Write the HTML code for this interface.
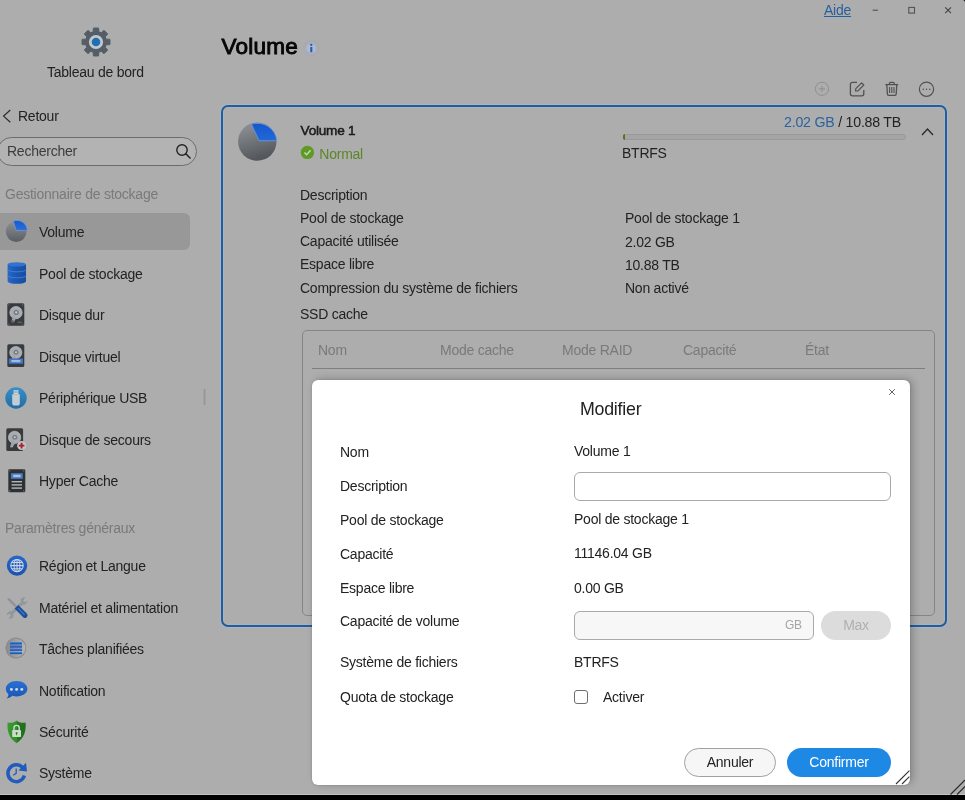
<!DOCTYPE html>
<html><head><meta charset="utf-8">
<style>
*{box-sizing:border-box;margin:0;padding:0}
html,body{width:965px;height:800px;overflow:hidden;background:#000}
body{font-family:"Liberation Sans",sans-serif;font-size:14px;color:#333;position:relative;letter-spacing:-0.24px}
#win{position:absolute;left:0;top:0;width:965px;height:795px;background:#fff;border-top-right-radius:3px;overflow:hidden;will-change:transform;-webkit-font-smoothing:antialiased}
#ov{position:absolute;left:0;top:0;width:965px;height:795px;background:rgba(0,0,0,.322);border-top-right-radius:3px}
.t{position:absolute;white-space:nowrap;line-height:16px;height:16px}
.g{color:#b4b4b4}
.abs{position:absolute}
svg{position:absolute;overflow:visible}
#sel{position:absolute;left:-6px;top:213px;width:196px;height:37px;border-radius:6px;background:#e0e0e0}
#search{position:absolute;left:-3px;top:137px;width:200px;height:29px;border:1px solid #6c6c6c;border-radius:15px;background:#b3b3b3}
#card{position:absolute;left:221px;top:105px;width:726px;height:522px;border:2px solid #2b5b90;border-radius:7px;box-shadow:0 0 0 1px rgba(150,190,232,.6), inset 0 0 0 1px rgba(150,190,232,.45)}
#ssd{position:absolute;left:302px;top:330px;width:633px;height:286px;border:1px solid #c4c4c4;border-radius:5px}
#modal{position:absolute;left:312px;top:380px;width:598px;height:405px;background:#fff;border-radius:6px;box-shadow:3px -1px 8px rgba(0,0,0,.24),0 0 2px rgba(0,0,0,.22)}
.inp{position:absolute;border:1px solid #a9a9a9;border-radius:6px;background:#fff}
.btn{position:absolute;height:29px;border-radius:15px;text-align:center;line-height:27px;font-size:14px}
.m{color:#222}
</style></head><body>
<div id="win">

<!-- SIDEBAR -->
<div class="t" style="left:47px;top:64px">Tableau de bord</div>
<div class="t" style="left:18px;top:108px">Retour</div>
<div class="t g" style="left:5px;top:186px">Gestionnaire de stockage</div>
<div id="sel"></div>
<div class="t" style="left:39px;top:223.8px">Volume</div>
<div class="t" style="left:39px;top:265.8px">Pool de stockage</div>
<div class="t" style="left:39px;top:306.8px">Disque dur</div>
<div class="t" style="left:39px;top:348.8px">Disque virtuel</div>
<div class="t" style="left:39px;top:389.8px">Périphérique USB</div>
<div class="t" style="left:39px;top:431.8px">Disque de secours</div>
<div class="t" style="left:39px;top:472.7px">Hyper Cache</div>
<div class="t g" style="left:5px;top:520.3px">Paramètres généraux</div>
<div class="t" style="left:39px;top:557.7px">Région et Langue</div>
<div class="t" style="left:39px;top:599.5px">Matériel et alimentation</div>
<div class="t" style="left:39px;top:640.6px">Tâches planifiées</div>
<div class="t" style="left:39px;top:682.6px">Notification</div>
<div class="t" style="left:39px;top:723.7px">Sécurité</div>
<div class="t" style="left:39px;top:765.3px">Système</div>
<div class="abs" style="left:203px;top:389px;width:3px;height:16px;background:#dcdcdc;border-left:1px solid #f2f2f2;border-right:1px solid #f2f2f2"></div>
<!--ICONS-->

<!-- MAIN -->
<div class="t" id="title" style="left:221.6px;top:32px;font-size:22.6px;line-height:30px;height:30px;color:#0a0a0a;letter-spacing:0.15px;-webkit-text-stroke:0.9px #0a0a0a">Volume</div>
<div class="t" style="left:824px;top:2px;color:#3a8ee6;text-decoration:underline">Aide</div>
<!--TOPICONS-->

<div class="t" style="left:300.6px;top:122.8px;font-size:13.6px;-webkit-text-stroke:0.5px #2a2a2a;color:#2a2a2a">Volume 1</div>
<div class="t" style="left:319.3px;top:145.6px;color:#8bc53f">Normal</div>
<div class="t" style="right:64px;top:114px;font-size:14.2px"><span style="color:#3f93ea">2.02 GB</span> / 10.88 TB</div>
<div class="abs" style="left:623px;top:134px;width:283px;height:6px;border:1px solid #e2e2e2;border-radius:3px;background:#f4f4f4"></div>
<div class="abs" style="left:623px;top:134px;width:2px;height:6px;background:#8aa52a;border-radius:2px 0 0 2px"></div>
<div class="t" style="left:622px;top:144.5px">BTRFS</div>

<div class="t" style="left:300px;top:187px">Description</div>
<div class="t" style="left:300px;top:210px">Pool de stockage</div>
<div class="t" style="left:300px;top:232.8px">Capacité utilisée</div>
<div class="t" style="left:300px;top:256.1px">Espace libre</div>
<div class="t" style="left:300px;top:280px">Compression du système de fichiers</div>
<div class="t" style="left:300px;top:305.5px">SSD cache</div>
<div class="t" style="left:625px;top:210px">Pool de stockage 1</div>
<div class="t" style="left:625px;top:233.5px">2.02 GB</div>
<div class="t" style="left:625px;top:256.5px">10.88 TB</div>
<div class="t" style="left:625px;top:280px">Non activé</div>

<div id="ssd"></div>
<div class="t g" style="left:318px;top:342px">Nom</div>
<div class="t g" style="left:440px;top:342px">Mode cache</div>
<div class="t g" style="left:562px;top:342px">Mode RAID</div>
<div class="t g" style="left:683px;top:342px">Capacité</div>
<div class="t g" style="left:805px;top:342px">État</div>
<div class="abs" style="left:312px;top:368px;width:613px;height:1px;background:#bcbcbc"></div>

<div id="ov"></div>
<div class="abs" style="left:0;top:794px;width:965px;height:1px;background:#c2c2c2"></div>
<div id="card"></div>
<div id="search"></div>
<div class="t" style="left:7px;top:143px;color:#3c3c3c">Rechercher</div>
<!--OVICONS-->
<!-- gear -->
<svg style="left:95.7px;top:42px" width="1" height="1">
<path d="M-2.83 -10.21 L-2.59 -13.96 L2.59 -13.96 L2.83 -10.21 L5.22 -9.23 L8.04 -11.70 L11.70 -8.04 L9.23 -5.22 L10.21 -2.83 L13.96 -2.59 L13.96 2.59 L10.21 2.83 L9.23 5.22 L11.70 8.04 L8.04 11.70 L5.22 9.23 L2.83 10.21 L2.59 13.96 L-2.59 13.96 L-2.83 10.21 L-5.22 9.23 L-8.04 11.70 L-11.70 8.04 L-9.23 5.22 L-10.21 2.83 L-13.96 2.59 L-13.96 -2.59 L-10.21 -2.83 L-9.23 -5.22 L-11.70 -8.04 L-8.04 -11.70 L-5.22 -9.23Z" fill="#555e67" stroke="#555e67" stroke-width="1" stroke-linejoin="round"/>
<circle r="7.1" fill="#c3c8cc"/><circle r="4.3" fill="#1f6fb5"/>
</svg>
<!-- back chevron -->
<svg style="left:0;top:107px" width="16" height="18"><path d="M10.3 3 L3.6 9.1 L10.3 15.2" fill="none" stroke="#2a2a2a" stroke-width="1.2"/></svg>
<!-- search glass -->
<svg style="left:174px;top:142px" width="20" height="20"><circle cx="8" cy="8" r="5.2" fill="none" stroke="#222" stroke-width="1.4"/><path d="M11.8 11.8 L16 16" stroke="#222" stroke-width="1.6" stroke-linecap="round"/></svg>

<!-- volume pie -->
<svg style="left:4px;top:219px" width="26" height="26" viewBox="0 0 26 26">
<defs><linearGradient id="gp" x1="0" y1="0" x2="0" y2="1"><stop offset="0" stop-color="#8d9297"/><stop offset="1" stop-color="#5a5e63"/></linearGradient>
<linearGradient id="bp" x1="0" y1="0" x2="0" y2="1"><stop offset="0" stop-color="#1559cf"/><stop offset="1" stop-color="#2a6fdc"/></linearGradient></defs>
<circle cx="12.2" cy="12.6" r="10.4" fill="url(#gp)"/>
<path d="M12.2 11.4 L9.4 2 A10.6 10.6 0 0 1 23.4 11.4 Z" fill="url(#bp)" stroke="#7f9fd0" stroke-width=".6"/>
</svg>

<!-- pool cylinder -->
<svg style="left:7px;top:261px" width="20" height="24" viewBox="0 0 20 24">
<defs><linearGradient id="cy" x1="0" y1="0" x2="1" y2="0"><stop offset="0" stop-color="#2a68c6"/><stop offset=".45" stop-color="#1b57b4"/><stop offset="1" stop-color="#1a4c9f"/></linearGradient></defs>
<path d="M.6 3.4 V20.6 A9.2 2.2 0 0 0 19 20.6 V3.4 Z" fill="url(#cy)"/>
<ellipse cx="9.8" cy="3.4" rx="9.2" ry="2.2" fill="#3273d0"/>
<path d="M.6 8.6 A9.2 2.2 0 0 0 19 8.6" fill="none" stroke="#4580d6" stroke-width=".9"/>
<path d="M.6 14.6 A9.2 2.2 0 0 0 19 14.6" fill="none" stroke="#4580d6" stroke-width=".9"/>
</svg>

<!-- HDD (disque dur) -->
<svg style="left:7.4px;top:303px" width="18" height="24" viewBox="0 0 18 24">
<rect x=".3" y=".3" width="17" height="22.4" rx="1.5" fill="#383b3e"/>
<circle cx="9" cy="9.6" r="6.2" fill="#a9adb1"/><circle cx="9" cy="9.6" r="6.2" fill="none" stroke="#c6cacd" stroke-width=".6"/>
<circle cx="9.2" cy="9.4" r="2.6" fill="#7a7e82"/><circle cx="9.2" cy="9.4" r="1.1" fill="#c4c8cb"/>
<path d="M4.4 19 L6 12.6 L9 15 L6.8 19.4 Z" fill="#a0a4a8"/>
<circle cx="5.6" cy="18.6" r="1.3" fill="#5a5e62"/>
<rect x="10.6" y="18.6" width="4.4" height="1.5" fill="#5d6165"/>
<circle cx="1.9" cy="1.9" r=".6" fill="#777"/><circle cx="15.7" cy="1.9" r=".6" fill="#777"/><circle cx="1.9" cy="21.1" r=".6" fill="#777"/><circle cx="15.7" cy="21.1" r=".6" fill="#777"/>
</svg>

<!-- VHD (disque virtuel) -->
<svg style="left:7.4px;top:344px" width="18" height="24" viewBox="0 0 18 24">
<rect x=".3" y=".3" width="17" height="22.8" rx="1.5" fill="#383b3e"/>
<circle cx="8.8" cy="8.5" r="6.1" fill="#a9adb1"/><circle cx="8.8" cy="8.5" r="6.1" fill="none" stroke="#c6cacd" stroke-width=".6"/>
<circle cx="9" cy="8.3" r="2.5" fill="#7a7e82"/><circle cx="9" cy="8.3" r="1" fill="#c4c8cb"/>
<path d="M4.6 14.6 L6.4 11 L9 13 L7 15 Z" fill="#a0a4a8"/>
<rect x="1.9" y="14.4" width="14" height="5.4" rx=".6" fill="#4678c6"/>
<rect x="4.4" y="16" width="9" height="2.2" fill="#b4cbec" opacity=".8"/>
</svg>

<!-- USB -->
<svg style="left:5.1px;top:386.6px" width="22" height="22" viewBox="0 0 22 22">
<defs><linearGradient id="us" x1="0" y1="0" x2="0" y2="1"><stop offset="0" stop-color="#3a8fc4"/><stop offset="1" stop-color="#1f6ea6"/></linearGradient></defs>
<circle cx="11" cy="11" r="10.7" fill="url(#us)"/>
<rect x="8.6" y="3.2" width="4.8" height="4" fill="#cfd6db"/>
<rect x="9.6" y="4.4" width="1" height="1.3" fill="#3f86b8"/><rect x="11.5" y="4.4" width="1" height="1.3" fill="#3f86b8"/>
<path d="M7.2 7.2 H14.8 V16 A2.6 2.6 0 0 1 12.2 18.6 H9.8 A2.6 2.6 0 0 1 7.2 16 Z" fill="#c4ccd2"/>
</svg>

<!-- HDD secours -->
<svg style="left:6.4px;top:427.5px" width="22" height="26" viewBox="0 0 22 26">
<rect x=".3" y=".3" width="16.8" height="22.6" rx="1.5" fill="#383b3e"/>
<circle cx="8.6" cy="9.4" r="6.2" fill="#a9adb1"/><circle cx="8.6" cy="9.4" r="6.2" fill="none" stroke="#c6cacd" stroke-width=".6"/>
<circle cx="8.8" cy="9.2" r="2.5" fill="#7a7e82"/><circle cx="8.8" cy="9.2" r="1" fill="#c4c8cb"/>
<path d="M4 19.2 L6 12.4 L9.2 15 L6.6 19.6 Z" fill="#a0a4a8"/>
<circle cx="15.6" cy="17.6" r="4.5" fill="#c6c6c6"/>
<path d="M15.6 14.8 V20.4 M12.8 17.6 H18.4" stroke="#b01c2c" stroke-width="1.9"/>
</svg>

<!-- Hyper cache SSD -->
<svg style="left:7.5px;top:468.5px" width="18" height="24" viewBox="0 0 18 24">
<rect x=".3" y=".3" width="17" height="23" rx="1.2" fill="#2e3134"/>
<rect x="3" y="4.2" width="11.8" height="5.6" fill="#4a78c2"/>
<rect x="5.2" y="5.7" width="7.4" height="2.5" fill="#b9cdec" opacity=".85"/>
<rect x="3.6" y="12" width="10.4" height="1.4" fill="#b4b8bc"/>
<rect x="3.6" y="15.2" width="10.4" height="1.4" fill="#b4b8bc"/>
<rect x="3.6" y="18.4" width="10.4" height="1.4" fill="#b4b8bc"/>
<circle cx="1.8" cy="1.8" r=".6" fill="#888"/><circle cx="15.8" cy="1.8" r=".6" fill="#888"/><circle cx="1.8" cy="21.8" r=".6" fill="#888"/><circle cx="15.8" cy="21.8" r=".6" fill="#888"/>
</svg>

<!-- Region globe -->
<svg style="left:5.6px;top:554.6px" width="22" height="22" viewBox="0 0 22 22">
<defs><linearGradient id="rg" x1="0" y1="0" x2="0" y2="1"><stop offset="0" stop-color="#2668cc"/><stop offset="1" stop-color="#1a51b0"/></linearGradient></defs>
<circle cx="11" cy="10.6" r="10.2" fill="url(#rg)"/>
<g fill="none" stroke="#ccd5e4" stroke-width="1.05">
<circle cx="11" cy="10.6" r="6.2"/><ellipse cx="11" cy="10.6" rx="2.9" ry="6.2"/><path d="M4.8 10.6 H17.2 M11 4.4 V16.8 M5.8 7.4 H16.2 M5.8 13.8 H16.2"/>
</g></svg>

<!-- Materiel tools -->
<svg style="left:5px;top:596px" width="24" height="24" viewBox="0 0 24 24">
<path d="M5.6 18.6 L18.4 5.6" stroke="#92979b" stroke-width="3" />
<path d="M15.2 4 A4.3 4.3 0 0 1 20.4 1.4 L18.2 4.4 L19.8 6.2 L22.6 4.4 A4.3 4.3 0 0 1 18 8.8 Z" fill="#92979b"/>
<path d="M8.8 20 A4.3 4.3 0 0 1 3.6 22.6 L5.8 19.6 L4.2 17.8 L1.4 19.6 A4.3 4.3 0 0 1 6 15.2 Z" fill="#92979b"/>
<path d="M2.4 2 L4.6 2.2 L11.6 9.6 L10 11.2 L2.8 4 Z" fill="#8e9397"/>
<path d="M9.6 12.6 L13.2 9 L21.8 17.6 A2.5 2.5 0 0 1 18.2 21.2 Z" fill="#1c4f9c"/>
<path d="M13 12.2 L19.6 18.8" stroke="#3f7fcf" stroke-width="1.1"/>
</svg>

<!-- Taches -->
<svg style="left:5.2px;top:637.4px" width="22" height="22" viewBox="0 0 22 22">
<defs><linearGradient id="tg" x1="0" y1="0" x2="1" y2="0"><stop offset="0" stop-color="#85888c"/><stop offset="1" stop-color="#b6b9bc"/></linearGradient></defs>
<circle cx="11" cy="11" r="10.5" fill="url(#tg)"/><circle cx="11" cy="11" r="9.9" fill="none" stroke="#8b8e91" stroke-width="1.1"/>
<g fill="#2058b4"><rect x="5" y="5.4" width="12" height="2.1"/><rect x="5" y="8.6" width="12" height="2.1"/><rect x="5" y="11.8" width="12" height="2.1"/><rect x="5" y="15" width="12" height="2.1"/></g>
<g fill="#4d86d6"><rect x="5" y="5.4" width="12" height=".7"/><rect x="5" y="8.6" width="12" height=".7"/><rect x="5" y="11.8" width="12" height=".7"/><rect x="5" y="15" width="12" height=".7"/></g>
</svg>

<!-- Notification -->
<svg style="left:5px;top:680px" width="24" height="22" viewBox="0 0 24 22">
<defs><linearGradient id="ng" x1="0" y1="0" x2="0" y2="1"><stop offset="0" stop-color="#2b6fd4"/><stop offset="1" stop-color="#1a55b6"/></linearGradient></defs>
<path d="M11.6 1 C17.8 1 22.4 4.4 22.4 8.8 C22.4 13.2 17.8 16.4 11.6 16.4 C10 16.4 8.6 16.2 7.2 15.8 C6 17.2 4 18.2 1.6 18.4 C2.8 17.2 3.4 15.8 3.4 14.2 C1.8 12.8 .8 10.8 .8 8.8 C.8 4.4 5.4 1 11.6 1 Z" fill="url(#ng)"/>
<circle cx="6.4" cy="9.4" r="1.45" fill="#d3dbe9"/><circle cx="11.6" cy="9.4" r="1.45" fill="#d3dbe9"/><circle cx="16.8" cy="9.4" r="1.45" fill="#d3dbe9"/>
</svg>

<!-- Securite shield -->
<svg style="left:7px;top:719.5px" width="20" height="25" viewBox="0 0 20 25">
<defs><linearGradient id="sg" x1="0" y1="0" x2="1" y2="0"><stop offset="0" stop-color="#3a9a30"/><stop offset=".5" stop-color="#348f2b"/><stop offset=".5" stop-color="#24781f"/><stop offset="1" stop-color="#1f6e1c"/></linearGradient></defs>
<path d="M9.6 .4 C11.4 2.2 14.6 3.2 18.6 2.6 C19.4 11.4 16.8 19 9.6 23.2 C2.4 19 -.2 11.4 .6 2.6 C4.6 3.2 7.8 2.2 9.6 .4 Z" fill="url(#sg)"/>
<rect x="5.2" y="10" width="8.8" height="7" rx=".8" fill="#cfdccd"/>
<path d="M7 10 V8 A2.6 2.6 0 0 1 12.2 8 V10" fill="none" stroke="#cfdccd" stroke-width="1.4"/>
<circle cx="9.6" cy="13" r="1.05" fill="#2f8429"/><rect x="9.1" y="13" width="1" height="2.2" fill="#2f8429"/>
</svg>

<!-- Systeme -->
<svg style="left:5px;top:761.6px" width="23" height="23" viewBox="0 0 23 23">
<path d="M17.6 5.6 A8.4 8.4 0 1 0 19.4 13.6" fill="none" stroke="#1f5cbe" stroke-width="3.5"/>
<path d="M13.4 8.4 L22 9.6 L21 .8 Z" fill="#1f5cbe"/>
<path d="M11.2 6.6 V11.4 L8.2 13.2" fill="none" stroke="#1f5cbe" stroke-width="1.3"/>
</svg>
<!-- info -->
<svg style="left:303px;top:39.5px" width="16" height="16" viewBox="0 0 16 16">
<circle cx="8.3" cy="8.3" r="7.6" fill="#a9adb6" stroke="#9da1aa" stroke-width=".7" stroke-dasharray="1.2 1"/>
<circle cx="8.3" cy="8.3" r="4.6" fill="#b4c0d6" opacity=".75"/>
<circle cx="8.3" cy="4.9" r="1.15" fill="#2459b8"/><rect x="7.25" y="6.9" width="2.1" height="5.4" rx=".6" fill="#2459b8"/>
</svg>
<!-- window controls -->
<svg style="left:868px;top:3px" width="90" height="14" viewBox="0 0 90 14">
<path d="M4.6 7.2 H10" stroke="#555" stroke-width="1.15"/>
<rect x="40.8" y="4.4" width="5.7" height="5.7" fill="none" stroke="#555" stroke-width="1.15"/>
<path d="M77.2 4.4 L83 10.2 M83 4.4 L77.2 10.2" stroke="#444" stroke-width="1.15"/>
</svg>
<!-- toolbar: add (disabled) -->
<svg style="left:814px;top:81px" width="16" height="16" viewBox="0 0 16 16"><circle cx="8" cy="7.8" r="6.6" fill="none" stroke="#8e8e8e" stroke-width="1"/><path d="M8 4.8 V10.8 M5 7.8 H11" stroke="#8e8e8e" stroke-width="1"/></svg>
<!-- edit -->
<svg style="left:849px;top:81px" width="17" height="17" viewBox="0 0 17 17">
<path d="M8 1.4 H3.4 A2 2 0 0 0 1.4 3.4 V12.8 A2 2 0 0 0 3.4 14.8 H12.8 A2 2 0 0 0 14.8 12.8 V9" fill="none" stroke="#505050" stroke-width="1.3"/>
<path d="M6.6 10 L6.8 7.6 L12.6 1.8 L14.8 4 L9 9.8 Z" fill="none" stroke="#505050" stroke-width="1.2" stroke-linejoin="round"/>
</svg>
<!-- trash -->
<svg style="left:884px;top:81px" width="16" height="16" viewBox="0 0 16 16">
<path d="M1.4 3.6 H14.2" stroke="#505050" stroke-width="1.3"/>
<path d="M5.4 3.4 V2.6 A1.2 1.2 0 0 1 6.6 1.4 H9 A1.2 1.2 0 0 1 10.2 2.6 V3.4" fill="none" stroke="#505050" stroke-width="1.2"/>
<path d="M2.8 3.8 L3.4 13 A1.4 1.4 0 0 0 4.8 14.4 H10.8 A1.4 1.4 0 0 0 12.2 13 L12.8 3.8" fill="none" stroke="#505050" stroke-width="1.3"/>
<path d="M5.6 6 V12 M7.8 6 V12 M10 6 V12" stroke="#505050" stroke-width="1.1"/>
</svg>
<!-- more -->
<svg style="left:918px;top:80.5px" width="17" height="17" viewBox="0 0 17 17"><circle cx="8.5" cy="8.2" r="7.1" fill="none" stroke="#505050" stroke-width="1.2"/><circle cx="5.3" cy="8.2" r=".8" fill="#505050"/><circle cx="8.5" cy="8.2" r=".8" fill="#505050"/><circle cx="11.7" cy="8.2" r=".8" fill="#505050"/></svg>
<!-- chevron up -->
<svg style="left:920px;top:126px" width="15" height="12" viewBox="0 0 15 12"><path d="M2 9 L7.5 3 L13 9" fill="none" stroke="#2c2c2c" stroke-width="1.4"/></svg>
<!-- card pie -->
<svg style="left:236px;top:120px" width="44" height="44" viewBox="0 0 44 44">
<defs><linearGradient id="gp2" x1="0" y1="0" x2=".3" y2="1"><stop offset="0" stop-color="#92979c"/><stop offset="1" stop-color="#54585d"/></linearGradient>
<linearGradient id="bp2" x1="0" y1="0" x2="0" y2="1"><stop offset="0" stop-color="#1558cc"/><stop offset="1" stop-color="#2168d8"/></linearGradient></defs>
<circle cx="21.3" cy="21.6" r="19.2" fill="url(#gp2)"/>
<path d="M23 20.7 L15.5 4.2 A19.4 19.4 0 0 1 40.8 20.7 Z" fill="url(#bp2)" stroke="#6d98dc" stroke-width=".8" stroke-linejoin="round"/>
</svg>
<!-- check -->
<svg style="left:300px;top:145px" width="15" height="15" viewBox="0 0 15 15"><circle cx="7.4" cy="7.4" r="6.7" fill="#5f9a26"/><path d="M4.4 7.6 L6.6 9.8 L10.6 5.2" fill="none" stroke="#c8d8b4" stroke-width="1.4"/></svg>

<!--/OVICONS-->

<!-- MODAL -->
<div id="modal"></div>
<div class="t m" style="left:580px;top:398px;font-size:17.8px;line-height:22px;height:22px">Modifier</div>
<div class="t m" style="left:340px;top:444.3px">Nom</div>
<div class="t m" style="left:340px;top:478.1px">Description</div>
<div class="t m" style="left:340px;top:511.6px">Pool de stockage</div>
<div class="t m" style="left:340px;top:545.5px">Capacité</div>
<div class="t m" style="left:340px;top:579.6px">Espace libre</div>
<div class="t m" style="left:340px;top:613.4px">Capacité de volume</div>
<div class="t m" style="left:340px;top:654.4px">Système de fichiers</div>
<div class="t m" style="left:340px;top:688.6px">Quota de stockage</div>
<div class="t m" style="left:574px;top:443.3px">Volume 1</div>
<div class="inp" style="left:574px;top:472px;width:317px;height:29px"></div>
<div class="t m" style="left:574px;top:511px">Pool de stockage 1</div>
<div class="t m" style="left:574px;top:545px">11146.04 GB</div>
<div class="t m" style="left:574px;top:579.7px">0.00 GB</div>
<div class="inp" style="left:574px;top:611px;width:240px;height:29px;background:#f7f7f7"></div>
<div class="t" style="left:785px;top:617px;font-size:12px;color:#a5a5a5">GB</div>
<div class="btn" style="left:821px;top:611px;width:70px;background:#dcdcdc;color:#b0b0b0;line-height:29px">Max</div>
<div class="t m" style="left:574px;top:654px">BTRFS</div>
<div class="abs" style="left:574px;top:690px;width:14px;height:14px;border:1px solid #6e6e6e;border-radius:3px;background:#fff"></div>
<div class="t m" style="left:603px;top:689px">Activer</div>
<div class="btn" style="left:684px;top:748px;width:92px;border:1px solid #a0a0a0;background:#f6f6f6;color:#222">Annuler</div>
<div class="btn" style="left:787px;top:748px;width:104px;background:#1e88e5;color:#fff;line-height:29px">Confirmer</div>
<!--MODALICONS-->
<svg style="left:887px;top:387px" width="10" height="10" viewBox="0 0 10 10"><path d="M2.2 2.2 L7.8 7.8 M7.8 2.2 L2.2 7.8" stroke="#666" stroke-width="1"/></svg>
<svg style="left:893px;top:767px" width="17" height="18" viewBox="0 0 17 18"><path d="M3 17 L16.4 3.6 M9 17 L16.4 9.6" stroke="#333" stroke-width="1.1"/></svg>
<svg style="left:948px;top:777px" width="17" height="18" viewBox="0 0 17 18"><path d="M2.5 17.5 L17 3 M9 17.5 L17 9.5" stroke="#2a2a2a" stroke-width="1.1"/></svg>

<!--/MODALICONS-->

</div>
</body></html>
